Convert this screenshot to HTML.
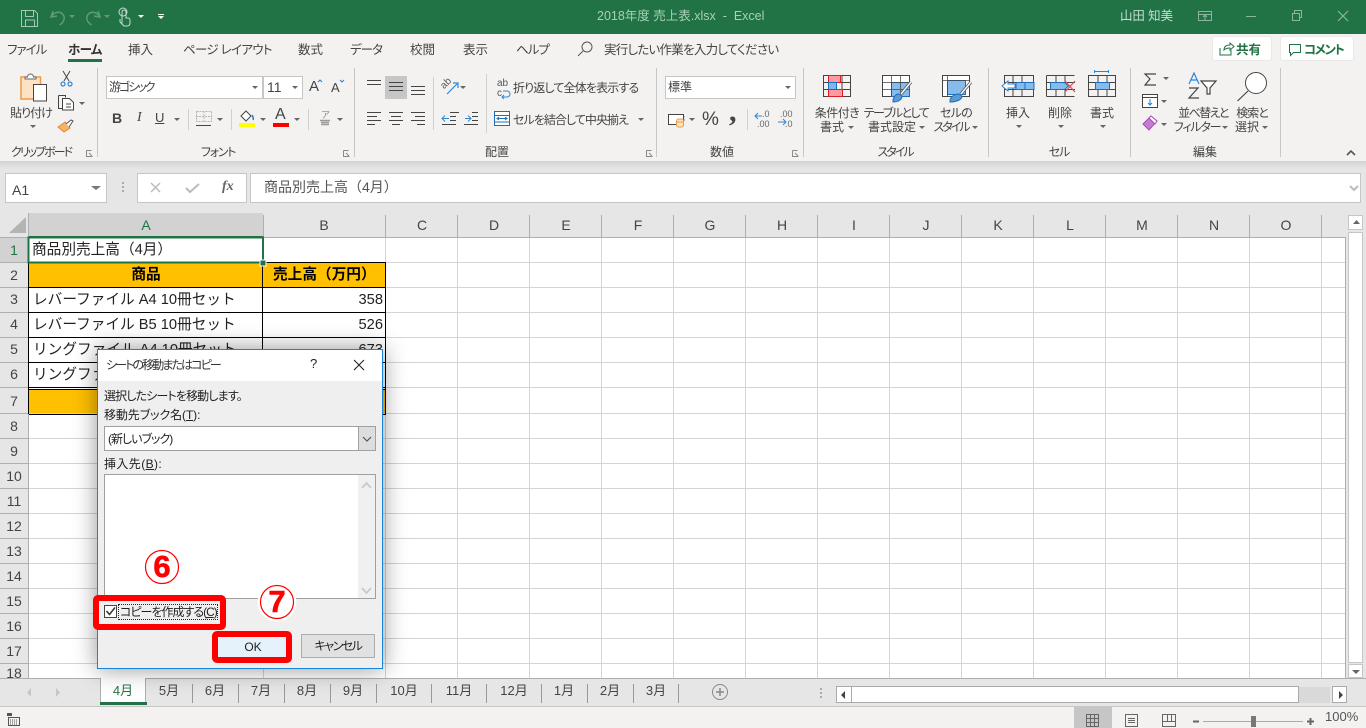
<!DOCTYPE html>
<html lang="ja"><head><meta charset="utf-8"><title>2018年度 売上表.xlsx - Excel</title>
<style>
html,body{margin:0;padding:0;width:1366px;height:728px;overflow:hidden;background:#e6e6e6}
body{position:relative;font-family:"Liberation Sans","Noto Sans CJK JP",sans-serif;color:#444}
div,span,svg{position:absolute}
svg{left:0;top:0}
.t{white-space:nowrap;font-size:12px;line-height:16px;font-feature-settings:"palt";color:#444}
.c{transform:translateX(-50%)}
.box{background:#fff;border:1px solid #c6c6c6;box-sizing:border-box}
.cell{white-space:nowrap;font-size:14.67px;line-height:20px;color:#222}
.h{font-size:14px;line-height:16px;color:#444;transform:translateX(-50%);white-space:nowrap}
.tab{font-size:13px;line-height:16px;top:683px;color:#444;transform:translateX(-50%);white-space:nowrap}
u{text-decoration:underline}
</style></head><body>
<!-- title bar -->
<div style="left:0;top:0;width:1366px;height:34px;background:#217346"></div>
<!-- ribbon -->
<div style="left:0;top:34px;width:1366px;height:127px;background:#f3f2f1"></div>
<div style="left:0;top:161px;width:1366px;height:8px;background:linear-gradient(#d2d2d2,#e6e6e6)"></div>
<span class="t" style="left:597px;top:8px;font-size:12.5px;color:#a8d0ba;font-feature-settings:normal;">2018年度 売上表.xlsx &nbsp;-&nbsp; Excel</span>
<span class="t" style="left:1120px;top:8px;color:#c5ddd0;font-size:12.5px;font-feature-settings:normal;letter-spacing:-.1px">山田 知美</span>
<!-- tabs -->
<span class="t" style="left:7px;top:42px;font-size:12.5px;letter-spacing:-1px">ファイル</span>
<span class="t" style="left:68px;top:42px;font-size:12.5px;font-weight:700;color:#333;letter-spacing:-.7px">ホーム</span>
<div style="left:68px;top:59px;width:34px;height:3px;background:#217346"></div>
<span class="t" style="left:128px;top:42px;font-size:12.5px">挿入</span>
<span class="t" style="left:183px;top:42px;font-size:12.5px;letter-spacing:-.7px">ページ レイアウト</span>
<span class="t" style="left:298px;top:42px;font-size:12.5px">数式</span>
<span class="t" style="left:350px;top:42px;font-size:12.5px;letter-spacing:-1px">データ</span>
<span class="t" style="left:410px;top:42px;font-size:12.5px">校閲</span>
<span class="t" style="left:463px;top:42px;font-size:12.5px">表示</span>
<span class="t" style="left:516px;top:42px;font-size:12.5px;letter-spacing:-1px">ヘルプ</span>
<span class="t" style="left:604px;top:42px;font-size:12.5px;letter-spacing:-.75px">実行したい作業を入力してください</span>
<div style="left:1213px;top:37px;width:58px;height:23px;background:#fff;border-radius:2px;box-shadow:0 0 1px #bbb"></div>
<div style="left:1281px;top:37px;width:72px;height:23px;background:#fff;border-radius:2px;box-shadow:0 0 1px #bbb"></div>
<span class="t" style="left:1236px;top:42px;font-size:12.5px;font-weight:700;color:#217346">共有</span>
<span class="t" style="left:1304px;top:42px;font-size:12.5px;font-weight:700;color:#217346;letter-spacing:-1.5px">コメント</span>
<!-- ribbon boxes -->
<div class="box" style="left:106px;top:76px;width:157px;height:23px"></div>
<div class="box" style="left:263px;top:76px;width:40px;height:23px"></div>
<div class="box" style="left:665px;top:76px;width:131px;height:23px"></div>
<div style="left:385px;top:76px;width:22px;height:23px;background:#c6c6c6"></div>
<span class="t" style="left:109px;top:79px;letter-spacing:-2px">游ゴシック</span>
<span class="t" style="left:267px;top:79px;font-size:14px">11</span>
<span class="t" style="left:668px;top:79px">標準</span>
<span class="t c" style="left:31px;top:105px;letter-spacing:-1px">貼り付け</span>
<span class="t" style="left:513px;top:80px;letter-spacing:-.85px">折り返して全体を表示する</span>
<span class="t" style="left:513px;top:112px;letter-spacing:-.95px">セルを結合して中央揃え</span>
<span class="t c" style="left:837px;top:105px;letter-spacing:-.5px">条件付き</span><span class="t c" style="left:832px;top:119px">書式</span>
<span class="t c" style="left:896px;top:105px;letter-spacing:-1.5px">テーブルとして</span><span class="t c" style="left:892px;top:119px">書式設定</span>
<span class="t c" style="left:956px;top:105px;letter-spacing:-.7px">セルの</span><span class="t c" style="left:951px;top:119px;letter-spacing:-2px">スタイル</span>
<span class="t c" style="left:1018px;top:105px">挿入</span><span class="t c" style="left:1060px;top:105px">削除</span><span class="t c" style="left:1102px;top:105px">書式</span>
<span class="t c" style="left:1203px;top:105px;letter-spacing:-1.6px">並べ替えと</span><span class="t c" style="left:1197px;top:119px;letter-spacing:-1.2px">フィルター</span>
<span class="t c" style="left:1252px;top:105px;letter-spacing:-1px">検索と</span><span class="t c" style="left:1247px;top:119px">選択</span>
<span class="t c" style="left:41px;top:144px;letter-spacing:-2px">クリップボード</span>
<span class="t c" style="left:218px;top:144px;letter-spacing:-1.3px">フォント</span>
<span class="t c" style="left:497px;top:144px">配置</span>
<span class="t c" style="left:722px;top:144px">数値</span>
<span class="t c" style="left:895px;top:144px;letter-spacing:-2px">スタイル</span>
<span class="t c" style="left:1059px;top:144px;letter-spacing:-1px">セル</span>
<span class="t c" style="left:1205px;top:144px">編集</span>
<span class="t" style="left:112px;top:110px;font-weight:700;font-size:14px;color:#444;font-family:'Liberation Sans'">B</span>
<span class="t" style="left:137px;top:110px;font-style:italic;font-size:14px;font-family:'Liberation Serif'">I</span>
<span class="t" style="left:155px;top:110px;font-size:13px;text-decoration:underline">U</span>
<span class="t" style="left:309px;top:79px;font-size:15px;">A</span>
<span class="t" style="left:331px;top:80px;font-size:13px;">A</span>
<span class="t" style="left:275px;top:107px;font-size:16px;">A</span>
<span class="t" style="left:702px;top:110px;font-size:19px;line-height:20px">%</span>
<span class="t" style="left:729px;top:98px;font-size:30px;line-height:28px;font-weight:700;font-family:'Liberation Serif'">,</span>
<!-- small glyph labels in icons -->
<span class="t" style="left:762px;top:110px;font-size:9px;line-height:9px;color:#666;font-feature-settings:normal">.0</span>
<span class="t" style="left:757px;top:120px;font-size:9px;line-height:9px;color:#666;font-feature-settings:normal">.00</span>
<span class="t" style="left:780px;top:110px;font-size:9px;line-height:9px;color:#666;font-feature-settings:normal">.00</span>
<span class="t" style="left:785px;top:120px;font-size:9px;line-height:9px;color:#666;font-feature-settings:normal">.0</span>
<span class="t" style="left:441px;top:79px;font-size:10px;line-height:10px;color:#555;transform:rotate(-45deg);font-feature-settings:normal">ab</span>
<span class="t" style="left:497px;top:79px;font-size:10px;line-height:10px;color:#555;font-feature-settings:normal">ab</span>
<span class="t" style="left:497px;top:89px;font-size:10px;line-height:10px;color:#555;font-feature-settings:normal">c</span>
<span class="t" style="left:321px;top:110px;font-size:9px;line-height:10px;color:#888;font-feature-settings:normal">ア</span>
<span class="t" style="left:670px;top:115px;font-size:7px;line-height:9px;color:#444;font-feature-settings:normal">CCC</span>
<!-- ribbon icons -->
<svg width="1366" height="170" fill="none" stroke-width="1">
<g stroke="#9cc4ae">
<path d="M21.5 10.5h13l3 3v13h-16z M25.5 10.5v6h8v-6 M25.5 26v-6h9v6" stroke="#a4c9b5"/>
<path d="M53 11l-2 6 6-1 M51.5 16c3-4 8-5 11-2s2 8-3 11" stroke="#5f9a7b" stroke-width="1.5"/>
<path d="M98 11l2 6-6-1 M99.5 16c-3-4-8-5-11-2s-2 8 3 11" stroke="#5f9a7b" stroke-width="1.5"/>
<path d="M122 24v-12a2 2 0 014 0v6h2a2 2 0 012 2v3c0 2-1 3-3 3h-3l-4-4v-3" stroke="#c4dccf"/>
<circle cx="123" cy="12" r="4" stroke="#c4dccf"/>
<rect x="1198.500" y="11.500" width="13" height="9" stroke="#8ab5a0"/><path d="M1198 14.500h13M1205 20v-4M1203 17l2-2 2 2" stroke="#8ab5a0"/>
<path d="M1246 16.500h10" stroke="#8ab5a0"/>
<path d="M1292.500 13.500h7v7h-7zM1294.500 13v-2.500h7v7h-2" stroke="#8ab5a0"/>
<path d="M1338 11l10 10M1348 11l-10 10" stroke="#8ab5a0" stroke-width="1.2"/>
</g>
<g stroke="none"><path d="M69 15h6l-3 3zM104 15h6l-3 3z" fill="#5f9a7b"/><path d="M138 15h6l-3 3z" fill="#fff"/><path d="M158 14h6v1h-6zM158 16h6l-3 3z" fill="#fff"/></g>
<!-- search, share, comment -->
<g stroke="#555"><circle cx="587" cy="47" r="5" /><path d="M583 51l-5 5"/></g>
<g stroke="#217346"><path d="M1220 48v7h11v-5M1224 50c0-4 3-5 6-5v-2l4 3.500-4 3.500v-2c-2 0-4 0-6 2z"/><path d="M1289.500 44.500h11v8h-7l-3 3v-3h-1z"/></g>
<!-- clipboard -->
<rect x="21" y="77" width="19.500" height="22" fill="#fde3c3" stroke="#ed9b44" stroke-width="1.500"/>
<path d="M25 79h11v-2h-2.500a3 3 0 00-6 0H25z" fill="#fff" stroke="#666"/>
<rect x="33.500" y="84.500" width="13" height="16.500" fill="#fff" stroke="#444"/>
<!-- scissors -->
<g stroke="#444"><path d="M63 71l6 10M70 71l-6 10"/></g><g stroke="#2b88d8" stroke-width="1.200"><circle cx="63" cy="84" r="2"/><circle cx="70" cy="84" r="2"/></g>
<!-- copy -->
<path d="M58.500 95.500h7v2M58.500 95.500v13h4" stroke="#444"/><path d="M62.500 98.500h7l4 4v7.500h-11z M66 104h5M66 107h5" stroke="#444" fill="#fff"/>
<!-- painter -->
<path d="M58 127l7-5 5 6-6 4z" fill="#f4b26b" stroke="#e98b2a"/><path d="M66 124l5-4 2 1-4 6" fill="#fff" stroke="#555"/>
<!-- carets -->
<g fill="#666" stroke="none"><path d="M30 125h6l-3 3zM79 102h6l-3 3zM174 118h6l-3 3zM217 118h6l-3 3zM260 118h6l-3 3zM294 118h6l-3 3zM337 118h6l-3 3zM252 86h6l-3 3zM292 86h6l-3 3zM460 86h6l-3 3zM638 118h6l-3 3zM785 86h6l-3 3zM689 118h6l-3 3zM848 126h6l-3 3zM919 126h6l-3 3zM972 126h6l-3 3zM1016 125h6l-3 3zM1058 125h6l-3 3zM1100 125h6l-3 3zM1163 77h6l-3 3zM1161 100h6l-3 3zM1161 123h6l-3 3zM1222 126h6l-3 3zM1262 126h6l-3 3z"/></g>
<!-- separators -->
<g stroke="#c6c6c6"><path d="M97.500 68v89M354.500 68v89M656.500 68v89M803.500 68v89M988.500 68v89M1130.500 68v89M1280.500 68v89"/></g>
<g stroke="#d0d0d0"><path d="M188.500 109v21M231.500 109v21M308.500 109v21M433.500 77v53M486.500 74v59M747.500 109v21"/></g>
<!-- launchers -->
<g stroke="#888"><path d="M86.500 150.500v6h6M343.500 150.500v6h6M646.500 150.500v6h6M792.500 150.500v6h6"/><path d="M89 153l3 3M346 153l3 3M649 153l3 3M795 153l3 3"/><path d="M86.500 150.500h5M343.500 150.500h5M646.500 150.500h5M792.500 150.500h5"/></g>
<!-- A up/down mini carets -->
<path d="M318 82l2-2 2 2M340 80l2 2 2-2" stroke="#2b7cd3"/>
<!-- borders icon -->
<path d="M196.500 111.500h15v10h-15zM204 111v10M196 116.500h16" stroke="#b5b5b5" stroke-dasharray="2 1"/><path d="M196 125.500h15" stroke="#444"/>
<!-- fill -->
<path d="M241 116l5-5 5 5-5 5z" stroke="#444" fill="#fff"/><path d="M252 115c1 2 2 3 1 5" stroke="#2b7cd3" stroke-width="1.500"/>
<rect x="239" y="123" width="16" height="4" fill="#ff0" />
<rect x="273" y="123" width="16" height="4" fill="#f00"/>
<!-- furigana -->
<path d="M320 120.500h10M321 124.500h8M321 122.500h8" stroke="#999" stroke-width="1.500"/>
<!-- alignment -->
<g stroke="#444"><path d="M367 80.500h14M367 84.500h14"/><path d="M389 82.500h14M389 86.500h14M389 90.500h14"/><path d="M411 86.500h14M411 90.500h14M411 94.500h14"/>
<path d="M367 112.500h14M367 116.500h10M367 120.500h14M367 124.500h8M389 112.500h14M391 116.500h10M389 120.500h14M392 124.500h8M411 112.500h14M415 116.500h10M411 120.500h14M417 124.500h8"/>
<path d="M450 112.500h9M450 116.500h6M450 120.500h6M442 124.500h14M472 112.500h6M472 116.500h6M472 120.500h6M464 124.500h14"/></g>
<path d="M442 118.500h7M445 115.500l-3 3 3 3M465 118.500h6M468 115.500l3 3-3 3" stroke="#2b88d8"/>
<!-- orientation -->
<path d="M447 94l10-10M453 83h5v5" stroke="#2b88d8" stroke-width="1.200"/>
<!-- wrap -->
<path d="M503 91h4a3 3 0 010 6h-5M504 95l-2 2 2 2" stroke="#2b88d8"/>
<!-- merge -->
<rect x="494.500" y="111.500" width="15" height="14" stroke="#1d6fb8" fill="#fff"/><path d="M494 115.500h16M494 122h16" stroke="#1d6fb8"/><path d="M498 118.500h8M499 117l-2 1.500 2 1.500M505 117l2 1.500-2 1.500" stroke="#1d6fb8"/>
<!-- number -->
<rect x="668.500" y="114.500" width="15" height="10" stroke="#444" fill="#fff"/><rect x="676.500" y="119" width="7" height="8" rx="2" fill="#fbe3c6" stroke="#ed9b44"/><path d="M677 122h6" stroke="#ed9b44"/>
<path d="M755 116h7M758 113l-3 3 3 3M778 122h8M783 119l3 3-3 3" stroke="#2b88d8"/>
<!-- conditional format -->
<g stroke="#444" stroke-width="1"><path d="M823.500 75.500h27v21h-27z M833 75v22M842 75v22M823 82.500h28M823 89.500h28"/></g>
<rect x="828.500" y="75.500" width="12" height="7" fill="#ff9aa2" stroke="#e31b23"/><rect x="828.500" y="82.500" width="8" height="7" fill="#7fb8e8" stroke="#1d6fb8"/><rect x="828.500" y="89.500" width="14" height="7" fill="#ff9aa2" stroke="#e31b23"/>
<!-- table format -->
<rect x="882.500" y="75.500" width="27" height="21" fill="#fff" stroke="#444"/><rect x="891.500" y="82.500" width="18" height="14" fill="#85bcec" stroke="#1d6fb8"/><path d="M891.500 75v21M900.500 75v21M882 82.500h28M882 89.500h28" stroke="#444" opacity=".75"/>
<path d="M911 82l-10 12" stroke="#555" stroke-width="3"/><path d="M911 82l-10 12" stroke="#fff" stroke-width="1.400"/><path d="M893 100c1-4 3-6 6-6l3 2c0 4-4 6-9 6z" fill="#5b9bd5" stroke="#1d6fb8"/>
<!-- cell style -->
<rect x="942.500" y="75.500" width="27" height="21" fill="#fff" stroke="#444"/><rect x="947.500" y="80.500" width="18" height="14" fill="#85bcec" stroke="#1d6fb8"/><path d="M942 80.500h28M947.500 75v21" stroke="#444" opacity=".75"/>
<path d="M971 82l-10 12" stroke="#555" stroke-width="3"/><path d="M971 82l-10 12" stroke="#fff" stroke-width="1.400"/><path d="M950 100c1-4 5-6 9-6l3 2c0 4-6 6-12 6z" fill="#5b9bd5" stroke="#1d6fb8"/>
<!-- insert -->
<path d="M1004.500 75.500h29v21h-29zM1013 75v21M1022 75v21M1004 82.500h30M1004 89.500h30" stroke="#444"/>
<rect x="1016" y="82.500" width="18" height="7" fill="#85bcec" stroke="#1d6fb8"/><path d="M1025 82v8" stroke="#1d6fb8"/>
<path d="M1002 86l6-5v3h7v4h-7v3z" fill="#fff" stroke="#2b88d8"/>
<!-- delete -->
<path d="M1046.500 75.500h28M1046.500 96.500h28M1046.500 75.500v21M1056 75v21M1065 75v21M1046 82.500h29M1046 89.500h29" stroke="#444"/>
<path d="M1050.500 82.500h14l4 3.500-4 3.500h-14z" fill="#85bcec" stroke="#1d6fb8"/>
<path d="M1065 81l10 11M1075 81l-10 11" stroke="#ee4b4b" stroke-width="1.300"/>
<!-- format -->
<path d="M1088.500 75.500h27v21h-27zM1098 75v21M1107 75v21M1088 82.500h28M1088 89.500h28" stroke="#444"/>
<rect x="1095.500" y="82.500" width="14" height="7" fill="#85bcec" stroke="#1d6fb8"/>
<path d="M1094.500 71.500h14M1094.500 70v3M1108.500 70v3" stroke="#1d86d8"/>
<!-- sum -->
<path d="M1156 74h-11l5 5-5 6h11" stroke="#444" stroke-width="1.200"/>
<rect x="1142.500" y="94.500" width="15" height="13" fill="#fff" stroke="#444"/><path d="M1142 97.500h16" stroke="#444"/><path d="M1150 99v6M1148 103l2 2 2-2" stroke="#1d86d8"/>
<path d="M1143 124l8-8 6 5-8 9z" fill="#c77ad1" stroke="#a84ab5"/><path d="M1149 118l2-2 6 5-2 3z" fill="#fff" stroke="#a84ab5"/>
<!-- sort -->
<path d="M1189 84l5-11 5 11M1191 80h6" stroke="#2b88d8" stroke-width="1.200"/><path d="M1189 88h9l-9 10h10" stroke="#444" stroke-width="1.200"/>
<path d="M1201 81h15l-6 7v6h-3v-6z" stroke="#444" fill="#fff" stroke-width="1.200"/>
<!-- find -->
<circle cx="1256" cy="83" r="10.500" fill="#fff" stroke="#444"/><path d="M1248 91l-10.500 10" stroke="#444" stroke-width="1.200"/>
<path d="M1347 155l4-4 4 4" stroke="#555" stroke-width="1.600"/>
</svg>

<!-- formula bar -->
<div class="box" style="left:5px;top:173px;width:102px;height:30px"></div>
<div class="box" style="left:137px;top:173px;width:110px;height:30px"></div>
<div class="box" style="left:250px;top:173px;width:1111px;height:30px"></div>
<span class="t" style="left:12px;top:182px;font-size:14px;font-feature-settings:normal">A1</span>
<span class="t" style="left:264px;top:179px;font-size:14px;font-feature-settings:normal;color:#555">商品別売上高（4月）</span>
<span class="t" style="left:222px;top:179px;font-size:14px;font-style:italic;font-weight:700;color:#666;font-family:'Liberation Serif'">fx</span>
<svg width="1366" height="215" fill="none">
<path d="M91 186h10l-5 4z" fill="#777"/>
<path d="M122 183h2M122 187h2M122 191h2" stroke="#aaa" stroke-width="2"/>
<path d="M151 183l9 9M160 183l-9 9" stroke="#bbb" stroke-width="1.500"/>
<path d="M186 188l4 4 9-8" stroke="#bbb" stroke-width="2"/>
<path d="M1350 186l4 4 4-4" stroke="#bbb" stroke-width="2"/>
</svg>

<!-- grid background -->
<div style="left:29px;top:238px;width:1316px;height:440px;background:#fff"></div>
<div style="left:29px;top:213px;width:234px;height:24px;background:#d2d2d2"></div>
<div style="left:0;top:238px;width:28px;height:25px;background:#d2d2d2"></div>
<div style="left:29px;top:263px;width:357px;height:24px;background:#ffc000"></div>
<div style="left:29px;top:390px;width:357px;height:24px;background:#ffc000"></div>

<svg width="1366" height="728" fill="none">
<g stroke="#d4d4d4">
<path d="M385.500 238v440M457.500 238v440M529.500 238v440M601.500 238v440M673.500 238v440M745.500 238v440M817.500 238v440M889.500 238v440M961.500 238v440M1033.500 238v440M1105.500 238v440M1177.500 238v440M1249.500 238v440M1321.500 238v440M263.500 238v25M263.500 414v264"/>
<path d="M29 262.500h1316M386 287.500h959M386 312.500h959M386 337.500h959M386 362.500h959M386 387.500h959M29 413.500h1316M29 438.500h1316M29 463.500h1316M29 488.500h1316M29 513.500h1316M29 538.500h1316M29 563.500h1316M29 588.500h1316M29 613.500h1316M29 638.500h1316M29 663.500h1316"/>
</g>
<g stroke="#aeaeae">
<path d="M28.500 213v465M0 237.500h1345M1345.500 237v441M0 678.500h1345"/>
<path d="M263.500 215v22M385.500 215v22M457.500 215v22M529.500 215v22M601.500 215v22M673.500 215v22M745.500 215v22M817.500 215v22M889.500 215v22M961.500 215v22M1033.500 215v22M1105.500 215v22M1177.500 215v22M1249.500 215v22M1321.500 215v22"/>
<path d="M0 262.500h28M0 287.500h28M0 312.500h28M0 337.500h28M0 362.500h28M0 387.500h28M0 413.500h28M0 438.500h28M0 463.500h28M0 488.500h28M0 513.500h28M0 538.500h28M0 563.500h28M0 588.500h28M0 613.500h28M0 638.500h28M0 663.500h28"/>
</g>
<path d="M9 233h17v-16z" fill="#b4b4b4"/>
<g stroke="#000">
<path d="M29 262.500h357M29 287.500h357M29 312.500h357M29 337.500h357M29 362.500h357M29 387.500h357M29 389.500h357M29 414.500h357M262.500 263v151M385.500 263v151M28.500 263v151"/>
</g>
<rect x="28.500" y="237.500" width="234.500" height="25" stroke="#217346" stroke-width="2"/>
<rect x="260" y="260" width="6" height="6" fill="#217346" stroke="#fff" stroke-width="1"/>
<path d="M29 236.500h234" stroke="#217346" stroke-width="1"/>
</svg>

<!-- column headers -->
<span class="h" style="left:146px;top:217px;color:#217346">A</span><span class="h" style="left:324px;top:217px">B</span>
<span class="h" style="left:422px;top:217px">C</span><span class="h" style="left:494px;top:217px">D</span><span class="h" style="left:566px;top:217px">E</span><span class="h" style="left:638px;top:217px">F</span><span class="h" style="left:710px;top:217px">G</span><span class="h" style="left:782px;top:217px">H</span><span class="h" style="left:854px;top:217px">I</span><span class="h" style="left:926px;top:217px">J</span><span class="h" style="left:998px;top:217px">K</span><span class="h" style="left:1070px;top:217px">L</span><span class="h" style="left:1142px;top:217px">M</span><span class="h" style="left:1214px;top:217px">N</span><span class="h" style="left:1286px;top:217px">O</span>
<!-- row headers -->
<span class="h" style="left:14px;top:242px;color:#217346">1</span><span class="h" style="left:14px;top:267px">2</span><span class="h" style="left:14px;top:291px">3</span><span class="h" style="left:14px;top:316px">4</span><span class="h" style="left:14px;top:341px">5</span><span class="h" style="left:14px;top:366px">6</span><span class="h" style="left:14px;top:393px">7</span><span class="h" style="left:14px;top:418px">8</span><span class="h" style="left:14px;top:443px">9</span><span class="h" style="left:14px;top:468px">10</span><span class="h" style="left:14px;top:493px">11</span><span class="h" style="left:14px;top:518px">12</span><span class="h" style="left:14px;top:543px">13</span><span class="h" style="left:14px;top:568px">14</span><span class="h" style="left:14px;top:593px">15</span><span class="h" style="left:14px;top:618px">16</span><span class="h" style="left:14px;top:643px">17</span><span class="h" style="left:14px;top:665px;height:13px;overflow:hidden">18</span>
<!-- cells -->
<span class="cell" style="left:32px;top:240px">商品別売上高（4月）</span>
<span class="cell" style="left:146px;top:265px;transform:translateX(-50%);font-weight:700;color:#000">商品</span>
<span class="cell" style="left:273px;top:265px;font-weight:700;color:#000">売上高（万円）</span>
<span class="cell" style="left:33px;top:290px;">レバーファイル A4 10冊セット</span>
<span class="cell" style="left:33px;top:315px;">レバーファイル B5 10冊セット</span>
<span class="cell" style="left:33px;top:340px;">リングファイル A4 10冊セット</span>
<span class="cell" style="left:33px;top:365px;">リングファイル B5 10冊セット</span>
<span class="cell" style="right:983px;top:290px;">358</span>
<span class="cell" style="right:983px;top:315px;">526</span>
<span class="cell" style="right:983px;top:340px;">673</span>

<!-- vertical scrollbar -->
<div style="left:1346px;top:213px;width:20px;height:465px;background:#e6e6e6"></div>
<div class="box" style="left:1348px;top:215px;width:15px;height:15px;background:#fff"></div>
<div class="box" style="left:1348px;top:232px;width:15px;height:431px;background:#fff"></div>
<div class="box" style="left:1348px;top:664px;width:15px;height:14px;background:#fff"></div>
<!-- sheet bar -->
<div style="left:0;top:678px;width:1366px;height:28px;background:#e6e6e6;border-top:1px solid #aeaeae;box-sizing:border-box"></div>
<div style="left:0;top:706px;width:1366px;height:22px;background:#f3f2f1;border-top:1px solid #c6c6c6;box-sizing:border-box"></div>
<div style="left:100px;top:678px;width:46px;height:24px;background:#fff;border:1px solid #aeaeae;border-top:0;border-bottom:0;box-sizing:border-box"></div>
<div style="left:100px;top:702px;width:47px;height:3px;background:#217346"></div>
<span class="tab" style="left:123px;color:#217346">4月</span>
<span class="tab" style="left:169px">5月</span><span class="tab" style="left:215px">6月</span><span class="tab" style="left:261px">7月</span><span class="tab" style="left:307px">8月</span><span class="tab" style="left:353px">9月</span><span class="tab" style="left:404px">10月</span><span class="tab" style="left:459px">11月</span><span class="tab" style="left:514px">12月</span><span class="tab" style="left:564px">1月</span><span class="tab" style="left:610px">2月</span><span class="tab" style="left:656px">3月</span>
<!-- h-scroll -->
<div class="box" style="left:836px;top:686px;width:16px;height:17px;background:#fff;border-color:#aaa"></div>
<div class="box" style="left:851px;top:686px;width:448px;height:17px;background:#fff;border-color:#aaa"></div>
<div style="left:1299px;top:687px;width:31px;height:16px;background:#d9d9d9"></div>
<div class="box" style="left:1332px;top:686px;width:15px;height:17px;background:#fff;border-color:#aaa"></div>
<div style="left:1074px;top:707px;width:38px;height:21px;background:#c6c6c6"></div>
<span class="t" style="left:1325px;top:709px;color:#555;font-size:13px;font-feature-settings:normal">100%</span>
<svg width="1366" height="728" fill="none" style="pointer-events:none">
<g stroke="#999"><path d="M192.500 684v19M238.500 684v19M284.500 684v19M330.500 684v19M376.500 684v19M431.500 684v19M486.500 684v19M541.500 684v19M587.500 684v19M633.500 684v19M678.500 684v19"/></g>
<path d="M31 688v9l-4-4.500zM56 688v9l4-4.500z" fill="#c6c6c6"/>
<circle cx="720" cy="692" r="7.500" stroke="#888"/><path d="M716 692h8M720 688v8" stroke="#888" stroke-width="1.500"/>
<path d="M820 689h2M820 693h2M820 697h2" stroke="#aaa" stroke-width="2"/>
<path d="M1353 224l3.500-4 3.500 4zM1352 670h8l-4 4z" fill="#666"/>
<path d="M845 691v8l-4-4zM1339 691v8l4-4z" fill="#444"/>
<!-- status icons -->
<path d="M7 713h5v3H7z" fill="#555"/>
<rect x="8.500" y="717.500" width="11" height="8" stroke="#555"/><path d="M10 720h8M10 722h8M10 724h8" stroke="#555" stroke-dasharray="1 1"/>
<path d="M1086.500 714.500h12v12h-12zM1090.500 714v13M1094.500 714v13M1086 718.500h13M1086 722.500h13" stroke="#666"/>
<path d="M1125.500 714.500h12v12h-12zM1128 718.500h7M1128 720.500h7M1128 722.500h7" stroke="#666"/>
<path d="M1162.500 714.500h13v12h-13zM1162 721.500h14M1167.500 714v7M1171.500 714v7" stroke="#666"/>
<path d="M1193 721.500h6" stroke="#666" stroke-width="2"/>
<path d="M1203 721.500h100" stroke="#aaa"/>
<rect x="1251" y="716" width="5" height="11" fill="#777"/>
<path d="M1307 721.500h7M1310.500 718v7" stroke="#666" stroke-width="2"/>
</svg>

<!-- dialog -->
<div style="left:97px;top:349px;width:286px;height:320px;background:#efefef;border:1px solid #1883d7;box-sizing:border-box;box-shadow:0 0 22px rgba(0,0,0,.42)">
<div style="left:0;top:0;width:284px;height:31px;background:#fff"></div>
</div>
<span class="t" style="left:106px;top:357px;font-size:12px;color:#333;letter-spacing:-1.9px">シートの移動またはコピー</span>
<span class="t" style="left:310px;top:356px;font-size:13px;color:#222">?</span>
<span class="t" style="left:104px;top:388px;color:#222;letter-spacing:-.85px">選択したシートを移動します。</span>
<span class="t" style="left:104px;top:407px;color:#222;letter-spacing:-.1px">移動先ブック名(<u>T</u>):</span>
<div style="left:104px;top:426px;width:272px;height:25px;background:#fff;border:1px solid #a0a0a0;box-sizing:border-box"></div>
<div style="left:358px;top:427px;width:17px;height:23px;background:#ddd;border-left:1px solid #a0a0a0;box-sizing:border-box"></div>
<span class="t" style="left:108px;top:431px;color:#222;letter-spacing:-1px">(新しいブック)</span>
<span class="t" style="left:104px;top:456px;color:#222;letter-spacing:.4px">挿入先(<u>B</u>):</span>
<div style="left:104px;top:474px;width:272px;height:125px;background:#fff;border:1px solid #a0a0a0;box-sizing:border-box"></div>
<div style="left:358px;top:475px;width:17px;height:123px;background:#f0f0f0"></div>
<!-- red boxes -->
<div style="left:93px;top:595px;width:133px;height:35px;box-sizing:border-box;border:6px solid #f00;border-radius:5px;background:#f0f0f0"></div>
<div style="left:118px;top:604px;width:100px;height:16px;box-sizing:border-box;border:1px dotted #222"></div>
<span class="t" style="left:120px;top:604px;color:#222;letter-spacing:-1px">コピーを作成する(<u>C</u>)</span>
<div style="left:104px;top:605px;width:13px;height:13px;background:#fff;border:1px solid #444;box-sizing:border-box"></div>
<div style="left:212px;top:631px;width:80px;height:32px;box-sizing:border-box;border:6px solid #f00;border-radius:5px;background:#e5f1fb"></div>
<span class="t c" style="left:253px;top:639px;color:#222;font-feature-settings:normal">OK</span>
<div style="left:301px;top:634px;width:74px;height:24px;box-sizing:border-box;border:1px solid #adadad;background:#e1e1e1"></div>
<span class="t c" style="left:338px;top:638px;color:#222;letter-spacing:-1.5px">キャンセル</span>
<svg width="1366" height="728" fill="none" style="pointer-events:none">
<path d="M354 360l10 10M364 360l-10 10" stroke="#222" stroke-width="1.100"/>
<path d="M363 437l4 4 4-4" stroke="#555" stroke-width="1.200"/>
<path d="M362 488l4.500-5 4.500 5M362 588l4.500 5 4.500-5" stroke="#c8c8c8" stroke-width="1.700"/>
<path d="M106.500 611l3 3.500 5.500-7" stroke="#333" stroke-width="1.500"/>
<circle cx="162" cy="567" r="19.500" fill="#fff" opacity=".95"/>
<circle cx="162" cy="567" r="16.500" stroke="#f00" stroke-width="1.200"/>
<circle cx="277" cy="602" r="19.500" fill="#fff" opacity=".95"/>
<circle cx="277" cy="602" r="16.500" stroke="#f00" stroke-width="1.200"/>
</svg>
<span style="left:162px;top:552px;font-size:31px;line-height:30px;font-weight:700;color:#f00;transform:translateX(-50%);-webkit-text-stroke:.6px #f00">6</span>
<span style="left:277px;top:587px;font-size:31px;line-height:30px;font-weight:700;color:#f00;transform:translateX(-50%);-webkit-text-stroke:.6px #f00">7</span>
</body></html>
